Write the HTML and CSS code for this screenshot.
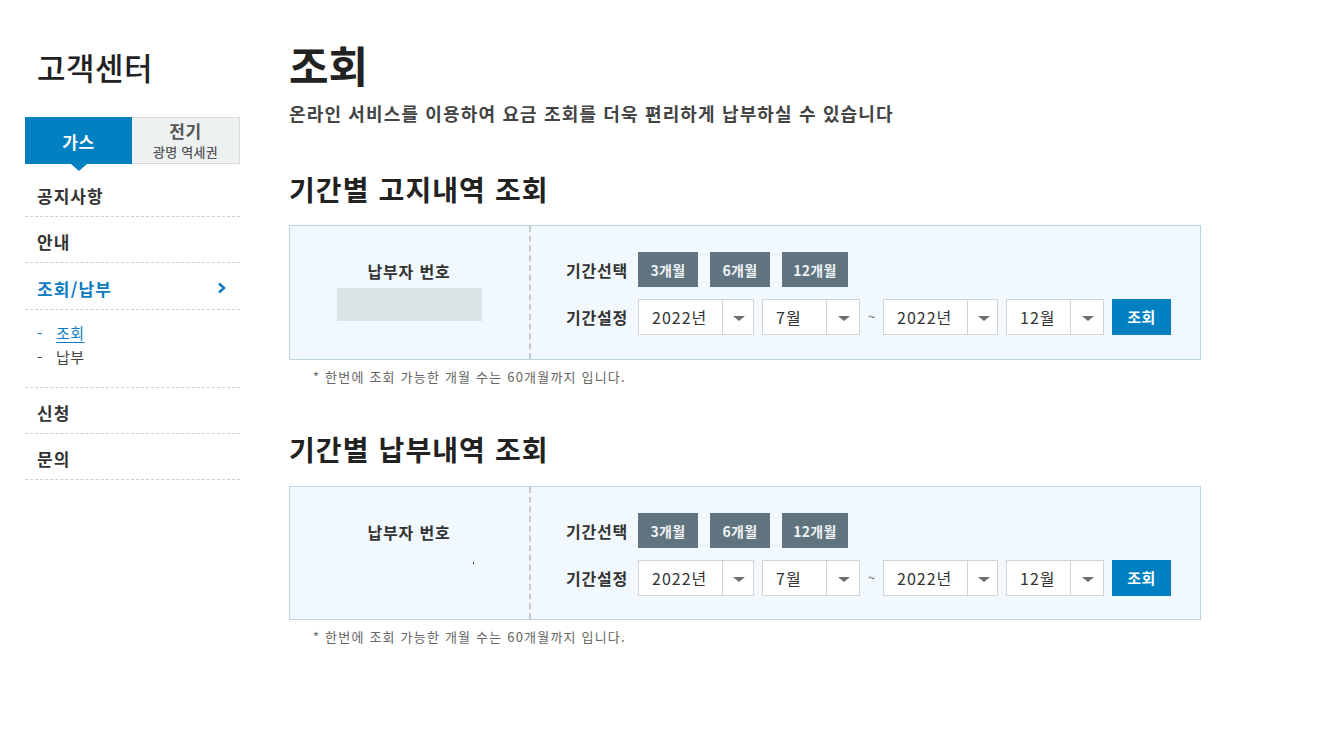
FILE: index.html
```html
<!DOCTYPE html>
<html lang="ko">
<head>
<meta charset="utf-8">
<title>조회</title>
<link rel="stylesheet" href="styles.css">
</head>
<body>
<div class="page">
  <aside class="sidebar">
    <h2 class="side-title">고객센터</h2>
    <div class="tabs">
      <div class="tab tab-active">가스</div>
      <div class="tab tab-off"><span class="tab-main">전기</span><span class="tab-sub">광명 역세권</span></div>
    </div>
    <ul class="menu">
      <li class="menu-item">공지사항</li>
      <li class="menu-item">안내</li>
      <li class="menu-item menu-current">조회/납부
        <svg class="chev" width="10" height="12" viewBox="0 0 10 12"><polyline points="2,1.5 7,6 2,10.5" fill="none" stroke="#0a7bc0" stroke-width="2.4"/></svg>
      </li>
      <li class="submenu">
        <div class="sub-item sub-on"><span class="dash">-</span><span class="sub-link">조회</span></div>
        <div class="sub-item"><span class="dash">-</span><span>납부</span></div>
      </li>
      <li class="menu-item">신청</li>
      <li class="menu-item">문의</li>
    </ul>
  </aside>

  <main class="main">
    <h1 class="title">조회</h1>
    <p class="lead">온라인 서비스를 이용하여 요금 조회를 더욱 편리하게 납부하실 수 있습니다</p>

    <h2 class="sec-title">기간별 고지내역 조회</h2>
    <div class="box">
      <div class="box-left">
        <div class="payer-label">납부자 번호</div>
        <div class="payer-field"></div>
      </div>
      <div class="box-right">
        <div class="row">
          <span class="row-label">기간선택</span>
          <button class="period">3개월</button>
          <button class="period">6개월</button>
          <button class="period wide">12개월</button>
        </div>
        <div class="row">
          <span class="row-label">기간설정</span>
          <div class="sel sel-year"><span class="sel-val">2022년</span><span class="sel-arrow"></span></div>
          <div class="sel sel-month"><span class="sel-val">7월</span><span class="sel-arrow"></span></div>
          <span class="tilde">~</span>
          <div class="sel sel-year"><span class="sel-val">2022년</span><span class="sel-arrow"></span></div>
          <div class="sel sel-month"><span class="sel-val">12월</span><span class="sel-arrow"></span></div>
          <button class="search">조회</button>
        </div>
      </div>
    </div>
    <p class="note">* 한번에 조회 가능한 개월 수는 60개월까지 입니다.</p>

    <h2 class="sec-title sec-second">기간별 납부내역 조회</h2>
    <div class="box box-second">
      <div class="box-left">
        <div class="payer-label">납부자 번호</div>
        <div class="payer-empty"><span class="dot"></span></div>
      </div>
      <div class="box-right">
        <div class="row">
          <span class="row-label">기간선택</span>
          <button class="period">3개월</button>
          <button class="period">6개월</button>
          <button class="period wide">12개월</button>
        </div>
        <div class="row">
          <span class="row-label">기간설정</span>
          <div class="sel sel-year"><span class="sel-val">2022년</span><span class="sel-arrow"></span></div>
          <div class="sel sel-month"><span class="sel-val">7월</span><span class="sel-arrow"></span></div>
          <span class="tilde">~</span>
          <div class="sel sel-year"><span class="sel-val">2022년</span><span class="sel-arrow"></span></div>
          <div class="sel sel-month"><span class="sel-val">12월</span><span class="sel-arrow"></span></div>
          <button class="search">조회</button>
        </div>
      </div>
    </div>
    <p class="note">* 한번에 조회 가능한 개월 수는 60개월까지 입니다.</p>
  </main>
</div>
</body>
</html>
```

FILE: styles.css
```css
* { box-sizing: border-box; }
html, body { margin: 0; padding: 0; background: #fff; }
body {
  font-family: "Noto Sans CJK KR", "Noto Sans", sans-serif;
  color: #333;
}
.page {
  display: flex;
  align-items: flex-start;
  padding-left: 25px;
}

/* Sidebar */
.sidebar { width: 215px; flex: none; }
.side-title {
  margin: 0;
  padding: 46px 0 0 12px;
  height: 117px;
  font-size: 31px;
  line-height: 42px;
  font-weight: 500;
  color: #222;
  letter-spacing: 0.5px;
}
.tabs { display: flex; height: 47px; }
.tab { flex: 1; display: flex; flex-direction: column; align-items: center; justify-content: center; }
.tab-active {
  position: relative;
  background: #0080c0;
  color: #fff;
  font-size: 17px;
  font-weight: 700;
  line-height: 20px;
  padding-top: 2px;
  letter-spacing: 0.5px;
}
.tab-active::after {
  content: "";
  position: absolute;
  left: 50%;
  bottom: -7px;
  margin-left: -8px;
  border-left: 8px solid transparent;
  border-right: 8px solid transparent;
  border-top: 7px solid #0080c0;
}
.tab-off {
  background: #eef1f2;
  border: 1px solid #d6dadc;
  border-left: 0;
  color: #555;
}
.tab-main { font-size: 17px; font-weight: 700; line-height: 18px; letter-spacing: 0.5px; }
.tab-sub { font-size: 13px; font-weight: 500; line-height: 16px; color: #555; margin-top: 4px; letter-spacing: 0.3px; }

.menu { list-style: none; margin: 7px 0 0; padding: 0; }
.menu-item {
  display: flex;
  align-items: center;
  justify-content: space-between;
  height: 46px;
  padding: 4px 12px 0 12px;
  border-bottom: 1px dashed #cfcfcf;
  font-size: 17px;
  font-weight: 700;
  color: #333;
  letter-spacing: 1px;
}
.menu-item:nth-child(3) { height: 47px; }
.menu-current { color: #0a7bc0; letter-spacing: 1.2px; }
.chev { margin-right: 1px; margin-top: -1px; }
.submenu {
  padding: 10px 12px 19px;
  border-bottom: 1px dashed #cfcfcf;
}
.sub-item {
  display: flex;
  height: 24px;
  align-items: center;
  font-size: 15px;
  color: #444;
  letter-spacing: 0.5px;
}
.dash { width: 19px; color: #444; }
.sub-on, .sub-on .dash { color: #0a7bc0; }
.sub-link { text-decoration: underline; text-underline-offset: 3px; }

/* Main */
.main { width: 912px; margin-left: 49px; padding-top: 38px; }
.title {
  margin: 0;
  font-size: 43px;
  line-height: 52px;
  font-weight: 700;
  color: #222;
}
.lead {
  margin: 11px 0 0;
  font-size: 18px;
  line-height: 24px;
  font-weight: 700;
  color: #444;
  letter-spacing: 1.15px;
}
.sec-title {
  margin: 46px 0 0;
  font-size: 28px;
  line-height: 36px;
  font-weight: 700;
  color: #222;
  letter-spacing: 1.1px;
}
.sec-second { margin-top: 44px; }
.box {
  display: flex;
  margin-top: 18px;
  height: 135px;
  border: 1px solid #bcd4e0;
  background: #f2f9fe;
}
.box-second { margin-top: 19px; height: 134px; }
.box-left {
  width: 241px;
  flex: none;
  border-right: 2px dashed #c9c9c9;
  display: flex;
  flex-direction: column;
  align-items: center;
  padding-top: 34px;
}
.payer-label {
  font-size: 16px;
  line-height: 22px;
  font-weight: 700;
  color: #333;
  margin-left: -1px;
  letter-spacing: 0.8px;
}
.payer-field {
  margin-top: 6px;
  width: 145px;
  height: 33px;
  background: #dde4e7;
}
.payer-empty { position: relative; width: 145px; height: 33px; margin-top: 6px; }
.dot {
  position: absolute;
  left: 136px;
  top: 13px;
  width: 1px;
  height: 2px;
  background: #333;
}
.box-right {
  padding: 26px 0 0 35px;
  display: flex;
  flex-direction: column;
  gap: 12px;
}
.row { display: flex; align-items: center; height: 35px; }
.row-label {
  width: 72px;
  font-size: 16px;
  font-weight: 700;
  color: #333;
  line-height: 20px;
  letter-spacing: 0.8px;
}
.period {
  font-family: inherit;
  border: 0;
  margin: 0 12px 0 0;
  padding: 0;
  width: 60px;
  height: 35px;
  background: #607480;
  color: #eef2f4;
  font-size: 14px;
  font-weight: 700;
  letter-spacing: 0.3px;
}
.period.wide { width: 66px; }
.sel {
  display: flex;
  height: 36px;
  border: 1px solid #d3d3d3;
  background: #fff;
  margin-right: 8px;
}
.sel-val {
  display: flex;
  align-items: center;
  padding-left: 13px;
  font-size: 16px;
  color: #333;
  border-right: 1px solid #d3d3d3;
  letter-spacing: 1px;
}
.sel-year { width: 116px; }
.sel-year + .sel-month + .tilde + .sel-year { width: 115px; }
.sel-year .sel-val { width: 84px; }
.sel-month { width: 98px; }
.sel-month .sel-val { width: 64px; }
.sel-arrow { flex: 1; position: relative; }
.sel-arrow::after {
  content: "";
  position: absolute;
  left: 50%;
  top: 50%;
  margin-left: -5px;
  margin-top: -1px;
  border-left: 6px solid transparent;
  border-right: 6px solid transparent;
  border-top: 5px solid #6f6f6f;
}
.tilde { font-size: 13px; color: #666; margin: 0 5px 0 0; width: 10px; }
.search {
  font-family: inherit;
  border: 0;
  padding: 0;
  width: 59px;
  height: 36px;
  background: #0080c0;
  color: #fff;
  font-size: 15px;
  font-weight: 700;
  letter-spacing: 0.5px;
}
.note {
  margin: 7px 0 0 24px;
  font-size: 13px;
  line-height: 20px;
  color: #666;
  letter-spacing: 1.2px;
}
```
